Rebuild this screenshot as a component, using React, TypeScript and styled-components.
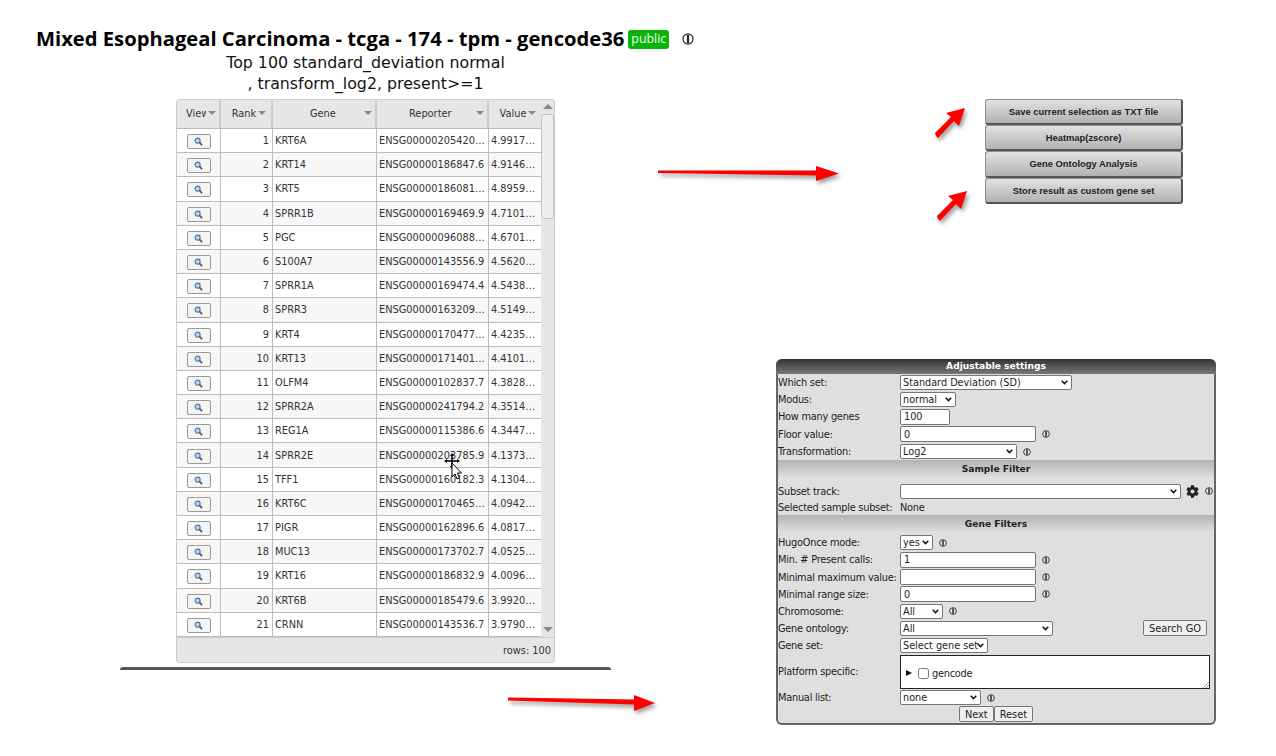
import styled, { createGlobalStyle } from 'styled-components';
import { FaCog } from 'react-icons/fa';

const GlobalStyle = createGlobalStyle`
  html, body {
    margin: 0;
    background: #fff;
  }
  body {
    font-family: 'DejaVu Sans', sans-serif;
    overflow: hidden;
  }
`;

const Page = styled.div`
  position: relative;
  width: 1276px;
  height: 756px;
  display: flex;
  overflow: hidden;
`;

const LeftColumn = styled.div`
  width: 731px;
  flex: none;
  display: flex;
  flex-direction: column;
  align-items: center;
  padding-top: 28px;
`;

const TitleRow = styled.div`
  align-self: flex-start;
  margin-left: 36px;
  display: flex;
  align-items: center;
  height: 22px;
  white-space: nowrap;
`;

const Title = styled.h1`
  margin: 0;
  padding-bottom: 2px;
  font: bold 20.2px 'Open Sans', sans-serif;
  color: #000;
`;

const Badge = styled.span`
  margin-left: 4px;
  padding: 0 3px;
  height: 19px;
  border-radius: 3px;
  background: #0ab20a;
  color: #e8ffe8;
  font: 12.4px/18px 'Open Sans', sans-serif;
`;

const TitleInfo = styled.span`
  display: flex;
  margin-left: 13px;
`;

const SubTitle = styled.div`
  margin-top: 2px;
  font: 15.8px/21px 'DejaVu Sans', sans-serif;
  color: #111;
  text-align: center;
  white-space: nowrap;
`;

const Grid = styled.div`
  margin-top: 5px;
  width: 379px;
  height: 564px;
  box-sizing: border-box;
  border: 1px solid #ccc;
  border-radius: 3px;
  background: #e6e6e6;
  display: flex;
  flex-direction: column;
  font-size: 9.8px;
  color: #333;
`;

const GridBody = styled.div`
  display: flex;
  flex: 1;
  min-height: 0;
`;

const Rows = styled.div`
  width: 364px;
  flex: none;
`;

const COLUMNS = '44px 52px 104px 112px 52px';

const HeaderRow = styled.div`
  display: grid;
  grid-template-columns: ${COLUMNS};
  height: 29px;
  background: #e6e6e6;
  border-bottom: 1px solid #bbb;
  box-sizing: border-box;
`;

const HeaderCell = styled.div<{ $inset?: number }>`
  display: flex;
  align-items: center;
  justify-content: ${(p) => (p.$inset ? 'space-between' : 'center')};
  gap: 2px;
  padding: ${(p) => (p.$inset ? `0 3px 2px ${p.$inset}px` : '0 0 2px 6px')};
  border-right: 2px solid #ccc;
  box-sizing: border-box;
  overflow: hidden;
  &:last-child {
    border-right: none;
  }
`;

const ClippedLabel = styled.span`
  width: 20px;
  overflow: hidden;
  white-space: nowrap;
`;

const Caret = styled.span`
  flex: none;
  width: 0;
  height: 0;
  border-left: 4.5px solid transparent;
  border-right: 4.5px solid transparent;
  border-top: 4.5px solid #888;
`;

const DataRow = styled.div<{ $odd: boolean }>`
  display: grid;
  grid-template-columns: ${COLUMNS};
  height: 24.2px;
  box-sizing: border-box;
  background: ${(p) => (p.$odd ? '#fff' : '#f7f7f7')};
  border-bottom: 1px solid #bdbdbd;
`;

const Cell = styled.div<{ $right?: boolean }>`
  display: flex;
  align-items: center;
  justify-content: ${(p) => (p.$right ? 'flex-end' : 'flex-start')};
  padding: 0 3px 0 2px;
  border-right: 1px solid #bdbdbd;
  box-sizing: border-box;
  white-space: nowrap;
  overflow: hidden;
  &:last-child {
    border-right: none;
  }
`;

const ViewCell = styled(Cell)`
  justify-content: center;
  padding: 2px 0 0;
`;

const ViewButton = styled.button`
  width: 24px;
  height: 15px;
  padding: 0;
  display: flex;
  align-items: center;
  justify-content: center;
  background: #f4f4f4;
  border: 1px solid #999;
  border-radius: 2px;
`;

const Scrollbar = styled.div`
  flex: 1;
  position: relative;
  display: flex;
  flex-direction: column;
  align-items: center;
`;

const ArrowUp = styled.span`
  margin-top: 4px;
  width: 0;
  height: 0;
  border-left: 5px solid transparent;
  border-right: 5px solid transparent;
  border-bottom: 5px solid #888;
`;

const Thumb = styled.div`
  margin-top: 5px;
  width: 13px;
  height: 105px;
  box-sizing: border-box;
  background: #eee;
  border: 1px solid #c4c4c4;
  border-radius: 3px;
`;

const ArrowDown = styled.span`
  margin-top: auto;
  margin-bottom: 5px;
  width: 0;
  height: 0;
  border-left: 5px solid transparent;
  border-right: 5px solid transparent;
  border-top: 5px solid #888;
`;

const GridFooter = styled.div`
  height: 25px;
  flex: none;
  display: flex;
  align-items: center;
  justify-content: flex-end;
  padding-right: 3px;
  border-top: 1px solid #ccc;
  box-sizing: border-box;
`;

const ClosingBar = styled.div`
  margin-top: 4px;
  width: 491px;
  height: 3px;
  background: #555;
  border-radius: 3px 3px 0 0;
`;

const RightColumn = styled.div`
  flex: 1;
  padding-top: 99px;
`;

const ButtonStack = styled.div`
  margin-left: 254px;
  width: 198px;
  display: flex;
  flex-direction: column;
`;

const ActionButton = styled.button`
  height: 26.2px;
  padding: 0;
  border: 1px solid #8e8e8e;
  border-right: 2px solid #555;
  border-bottom: 2px solid #555;
  border-radius: 3px;
  background: linear-gradient(#e2e2e2, #b2b2b2);
  font: bold 9.4px 'Liberation Sans', sans-serif;
  color: #222;
`;

const Panel = styled.div`
  margin: 155px 0 0 45px;
  width: 440px;
  height: 366px;
  box-sizing: border-box;
  background: #dfdfdf;
  border: 2px solid #666;
  border-top: none;
  border-radius: 6px;
  display: flex;
  flex-direction: column;
  font-size: 9.8px;
  letter-spacing: -0.25px;
  color: #222;
`;

const PanelHeader = styled.div`
  margin: 0 -2px;
  height: 15px;
  background: linear-gradient(#333, #777);
  border-radius: 6px 6px 0 0;
  color: #fff;
  font-weight: bold;
  font-size: 9.1px;
  letter-spacing: 0;
  line-height: 15px;
  text-align: center;
`;

const SectionBand = styled.div<{ $height: number }>`
  height: ${(p) => p.$height}px;
  flex: none;
  background: linear-gradient(#b2b2b2, #dfdfdf);
  font-weight: bold;
  font-size: 9.1px;
  letter-spacing: 0;
  display: flex;
  align-items: center;
  justify-content: center;
`;

const SettingRow = styled.div<{ $height?: number; $pad?: number }>`
  display: grid;
  grid-template-columns: 122px 1fr;
  align-items: center;
  height: ${(p) => p.$height ?? 17.3}px;
  padding-top: ${(p) => p.$pad ?? 0}px;
  box-sizing: border-box;
  flex: none;
  white-space: nowrap;
`;

const RowControls = styled.div`
  display: flex;
  align-items: center;
  gap: 6px;
  height: 100%;
`;

const SelectWrap = styled.span<{ $width: number }>`
  position: relative;
  display: block;
  flex: none;
  width: ${(p) => p.$width}px;
  height: 15px;
`;

const SelectField = styled.select`
  appearance: none;
  display: block;
  width: 100%;
  height: 100%;
  box-sizing: border-box;
  padding: 0 0 0 2px;
  font: 9.7px 'DejaVu Sans', sans-serif;
  color: #222;
  background: #fff;
  border: 1px solid #767676;
  border-radius: 2px;
`;

const Chevron = styled.svg`
  position: absolute;
  right: 4px;
  top: 5px;
  pointer-events: none;
`;

const Select = ({ width, value }: { width: number; value: string }) => (
  <SelectWrap $width={width}>
    <SelectField>
      <option>{value}</option>
    </SelectField>
    <Chevron width="7" height="5" viewBox="0 0 7 5">
      <path d="M0.700 0.800L3.500 3.600L6.300 0.800" fill="none" stroke="#111" strokeWidth="1.500" />
    </Chevron>
  </SelectWrap>
);

const TextInput = styled.input<{ $width: number }>`
  width: ${(p) => p.$width}px;
  height: 16px;
  box-sizing: border-box;
  padding: 0 3px;
  font: 9.7px 'DejaVu Sans', sans-serif;
  color: #222;
  background: #fff;
  border: 1px solid #767676;
  border-radius: 2px;
`;

const PlainButton = styled.button`
  height: 16px;
  padding: 0 5px;
  font: 9.8px 'DejaVu Sans', sans-serif;
  color: #222;
  background: #efefef;
  border: 1px solid #767676;
  border-radius: 2px;
`;

const SearchGoButton = styled(PlainButton)`
  margin-left: auto;
  margin-right: 7px;
`;

const PlatformBox = styled.div`
  width: 310px;
  height: 34px;
  box-sizing: border-box;
  background: #fff;
  border: 1px solid #222;
  display: flex;
  align-items: center;
  gap: 3px;
  padding: 3px 0 0 5px;
  position: relative;
`;

const Triangle = styled.span`
  width: 0;
  height: 0;
  border-top: 3.5px solid transparent;
  border-bottom: 3.5px solid transparent;
  border-left: 6px solid #111;
  margin-right: 3px;
`;

const Checkbox = styled.input`
  margin: 0;
  width: 11px;
  height: 11px;
`;

const ResizeGrip = styled.svg`
  position: absolute;
  right: 0;
  bottom: 0;
`;

const FormButtons = styled.div`
  display: flex;
  justify-content: center;
`;

const Arrow = styled.svg<{ $left: number; $top: number }>`
  position: absolute;
  left: ${(p) => p.$left}px;
  top: ${(p) => p.$top}px;
  overflow: visible;
  filter: drop-shadow(2px 3px 2px rgba(0, 0, 0, 0.4));
`;

const Cursor = styled.svg`
  position: absolute;
  left: 443px;
  top: 453px;
  overflow: visible;
`;

const InfoIcon = ({ size = 8 }: { size?: number }) => (
  <svg width={size} height={size} viewBox="0 0 10 10" style={{ flex: 'none' }}>
    <circle cx="5" cy="5" r="4.2" fill="none" stroke="#222" strokeWidth="1" />
    <path d="M5 1.5v7" stroke="#222" strokeWidth="1.8" />
  </svg>
);

const Magnifier = () => (
  <svg width="9" height="9" viewBox="0 0 10 10">
    <circle cx="4" cy="4" r="2.8" fill="#bcd6ee" stroke="#4a7ba8" strokeWidth="1.3" />
    <path d="M6 6l3 3" stroke="#555" strokeWidth="1.8" />
  </svg>
);

const genes: [string, string, string][] = [
  ['KRT6A', 'ENSG00000205420…', '4.9917…'],
  ['KRT14', 'ENSG00000186847.6', '4.9146…'],
  ['KRT5', 'ENSG00000186081…', '4.8959…'],
  ['SPRR1B', 'ENSG00000169469.9', '4.7101…'],
  ['PGC', 'ENSG00000096088…', '4.6701…'],
  ['S100A7', 'ENSG00000143556.9', '4.5620…'],
  ['SPRR1A', 'ENSG00000169474.4', '4.5438…'],
  ['SPRR3', 'ENSG00000163209…', '4.5149…'],
  ['KRT4', 'ENSG00000170477…', '4.4235…'],
  ['KRT13', 'ENSG00000171401…', '4.4101…'],
  ['OLFM4', 'ENSG00000102837.7', '4.3828…'],
  ['SPRR2A', 'ENSG00000241794.2', '4.3514…'],
  ['REG1A', 'ENSG00000115386.6', '4.3447…'],
  ['SPRR2E', 'ENSG00000203785.9', '4.1373…'],
  ['TFF1', 'ENSG00000160182.3', '4.1304…'],
  ['KRT6C', 'ENSG00000170465…', '4.0942…'],
  ['PIGR', 'ENSG00000162896.6', '4.0817…'],
  ['MUC13', 'ENSG00000173702.7', '4.0525…'],
  ['KRT16', 'ENSG00000186832.9', '4.0096…'],
  ['KRT6B', 'ENSG00000185479.6', '3.9920…'],
  ['CRNN', 'ENSG00000143536.7', '3.9790…'],
];

const actions = [
  'Save current selection as TXT file',
  'Heatmap(zscore)',
  'Gene Ontology Analysis',
  'Store result as custom gene set',
];

function App() {
  return (
    <Page>
      <GlobalStyle />
      <LeftColumn>
        <TitleRow>
          <Title>Mixed Esophageal Carcinoma - tcga - 174 - tpm - gencode36</Title>
          <Badge>public</Badge>
          <TitleInfo>
            <InfoIcon size={12} />
          </TitleInfo>
        </TitleRow>
        <SubTitle>
          Top 100 standard_deviation normal
          <br />, transform_log2, present&gt;=1
        </SubTitle>
        <Grid>
          <GridBody>
            <Rows>
              <HeaderRow>
                <HeaderCell>
                  <ClippedLabel>View</ClippedLabel>
                  <Caret />
                </HeaderCell>
                <HeaderCell>
                  Rank
                  <Caret />
                </HeaderCell>
                <HeaderCell $inset={37}>
                  Gene
                  <Caret />
                </HeaderCell>
                <HeaderCell $inset={32}>
                  Reporter
                  <Caret />
                </HeaderCell>
                <HeaderCell>
                  Value
                  <Caret />
                </HeaderCell>
              </HeaderRow>
              {genes.map(([gene, reporter, value], i) => (
                <DataRow key={gene} $odd={i % 2 === 0}>
                  <ViewCell>
                    <ViewButton>
                      <Magnifier />
                    </ViewButton>
                  </ViewCell>
                  <Cell $right>{i + 1}</Cell>
                  <Cell>{gene}</Cell>
                  <Cell>{reporter}</Cell>
                  <Cell>{value}</Cell>
                </DataRow>
              ))}
            </Rows>
            <Scrollbar>
              <ArrowUp />
              <Thumb />
              <ArrowDown />
            </Scrollbar>
          </GridBody>
          <GridFooter>rows: 100</GridFooter>
        </Grid>
        <ClosingBar />
      </LeftColumn>

      <RightColumn>
        <ButtonStack>
          {actions.map((label) => (
            <ActionButton key={label}>{label}</ActionButton>
          ))}
        </ButtonStack>

        <Panel>
          <PanelHeader>Adjustable settings</PanelHeader>
          <SettingRow>
            <span>Which set:</span>
            <RowControls>
              <Select width={172} value="Standard Deviation (SD)" />
            </RowControls>
          </SettingRow>
          <SettingRow>
            <span>Modus:</span>
            <RowControls>
              <Select width={56} value="normal" />
            </RowControls>
          </SettingRow>
          <SettingRow>
            <span>How many genes</span>
            <RowControls>
              <TextInput $width={50} defaultValue="100" />
            </RowControls>
          </SettingRow>
          <SettingRow>
            <span>Floor value:</span>
            <RowControls>
              <TextInput $width={136} defaultValue="0" />
              <InfoIcon />
            </RowControls>
          </SettingRow>
          <SettingRow>
            <span>Transformation:</span>
            <RowControls>
              <Select width={117} value="Log2" />
              <InfoIcon />
            </RowControls>
          </SettingRow>

          <SectionBand $height={18}>Sample Filter</SectionBand>
          <SettingRow $height={22} $pad={4}>
            <span>Subset track:</span>
            <RowControls>
              <Select width={281} value="" />
              <FaCog size={13} color="#222" style={{ marginLeft: -1 }} />
              <InfoIcon size={8} />
            </RowControls>
          </SettingRow>
          <SettingRow $height={15}>
            <span>Selected sample subset:</span>
            <span>None</span>
          </SettingRow>

          <SectionBand $height={17}>Gene Filters</SectionBand>
          <SettingRow $height={19} $pad={2}>
            <span>HugoOnce mode:</span>
            <RowControls>
              <Select width={33} value="yes" />
              <InfoIcon />
            </RowControls>
          </SettingRow>
          <SettingRow>
            <span>Min. # Present calls:</span>
            <RowControls>
              <TextInput $width={136} defaultValue="1" />
              <InfoIcon />
            </RowControls>
          </SettingRow>
          <SettingRow>
            <span>Minimal maximum value:</span>
            <RowControls>
              <TextInput $width={136} />
              <InfoIcon />
            </RowControls>
          </SettingRow>
          <SettingRow>
            <span>Minimal range size:</span>
            <RowControls>
              <TextInput $width={136} defaultValue="0" />
              <InfoIcon />
            </RowControls>
          </SettingRow>
          <SettingRow $height={16.5}>
            <span>Chromosome:</span>
            <RowControls>
              <Select width={43} value="All" />
              <InfoIcon />
            </RowControls>
          </SettingRow>
          <SettingRow>
            <span>Gene ontology:</span>
            <RowControls>
              <Select width={153} value="All" />
              <SearchGoButton>Search GO</SearchGoButton>
            </RowControls>
          </SettingRow>
          <SettingRow>
            <span>Gene set:</span>
            <RowControls>
              <Select width={88} value="Select gene set" />
            </RowControls>
          </SettingRow>
          <SettingRow $height={35.3}>
            <span>Platform specific:</span>
            <PlatformBox>
              <Triangle />
              <Checkbox type="checkbox" />
              gencode
              <ResizeGrip width="7" height="7" viewBox="0 0 7 7">
                <path d="M1 7l6-6M4 7l3-3" stroke="#888" strokeWidth="0.8" />
              </ResizeGrip>
            </PlatformBox>
          </SettingRow>
          <SettingRow $height={16.5}>
            <span>Manual list:</span>
            <RowControls>
              <Select width={81} value="none" />
              <InfoIcon />
            </RowControls>
          </SettingRow>
          <FormButtons>
            <PlainButton>Next</PlainButton>
            <PlainButton>Reset</PlainButton>
          </FormButtons>
        </Panel>
      </RightColumn>

      <Arrow $left={658} $top={164} width="182" height="18" viewBox="0 0 182 18">
        <path d="M0 6.500L158 6.500V2L181 9.500L158 17V11.500L0 9Z" fill="#f00" />
      </Arrow>
      <Arrow $left={508} $top={694} width="148" height="18" viewBox="0 0 148 18">
        <path d="M0 3.500L126 5.500V1L147 9L126 17V10.500L0 6.500Z" fill="#f00" />
      </Arrow>
      <Arrow $left={934} $top={106} width="32" height="32" viewBox="0 0 32 32">
        <path d="M2 30L1 27L17 11L12 7L31 2L25 20L20 15L4 32Z" fill="#f00" />
      </Arrow>
      <Arrow $left={936} $top={189} width="32" height="32" viewBox="0 0 32 32">
        <path d="M2 30L1 27L17 11L12 7L31 2L25 20L20 15L4 32Z" fill="#f00" />
      </Arrow>

      <Cursor width="20" height="26" viewBox="0 0 20 26">
        <path d="M9 2v12M3 8h12" stroke="#000" strokeWidth="1.500" />
        <path d="M9 0l-2 3h4zM9 16l-2-3h4zM1 8l3-2v4zM17 8l-3-2v4z" fill="#000" />
        <path d="M9 10v14l3-3 2 5 2.500-1-2-5h4z" fill="#fff" stroke="#000" strokeWidth="1" />
      </Cursor>
    </Page>
  );
}

export default App;
